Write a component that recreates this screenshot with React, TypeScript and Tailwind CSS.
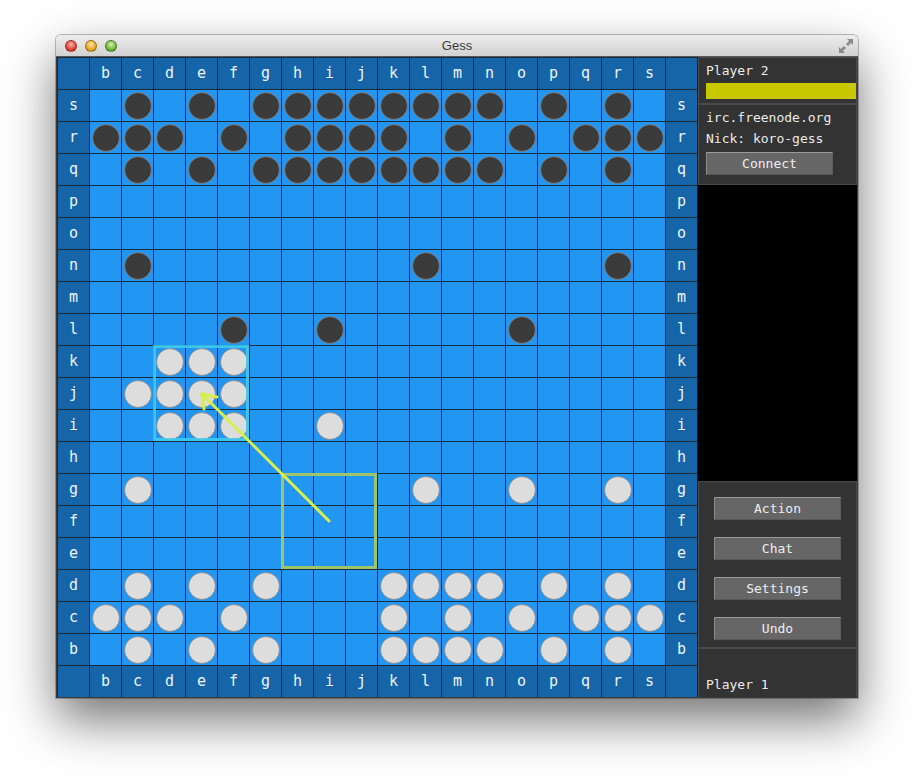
import React from 'react'

const COLS = 'bcdefghijklmnopqrs'.split('')
const ROWS = 'srqponmlkjihgfedcb'.split('')

// stones per row, listed by column letter
const BLACK: Record<string, string> = {
  s: 'ceghijklmnpr',
  r: 'bcdfhijkmoqrs',
  q: 'ceghijklmnpr',
  n: 'clr',
  l: 'fio',
}
const WHITE: Record<string, string> = {
  k: 'def',
  j: 'cdef',
  i: 'defi',
  g: 'clor',
  d: 'cegklmnpr',
  c: 'bcdfkmoqrs',
  b: 'cegklmnpr',
}

const mono = { fontFamily: '"DejaVu Sans Mono", "Liberation Mono", monospace' }

function Cell({ r, c }: { r: number; c: number }) {
  const edge = r === 0 || r === 19 || c === 0 || c === 19
  const base = 'flex h-[32px] w-[32px] items-center justify-center border-l border-t border-[#1a2a3a] '
  if (edge) {
    let label = ''
    if ((r === 0 || r === 19) && c > 0 && c < 19) label = COLS[c - 1]
    if ((c === 0 || c === 19) && r > 0 && r < 19) label = ROWS[r - 1]
    return (
      <div className={base + 'bg-[#1565a8] text-[15px] text-[#eef3f8]'} style={mono}>
        {label}
      </div>
    )
  }
  const row = ROWS[r - 1]
  const col = COLS[c - 1]
  const black = BLACK[row]?.includes(col)
  const white = WHITE[row]?.includes(col)
  return (
    <div className={base + 'bg-[#2196f3]'}>
      {black && <span className="h-[28px] w-[28px] rounded-full border border-[#808080] bg-[#3a3a3a]" />}
      {white && <span className="h-[28px] w-[28px] rounded-full border border-[#8e8e8e] bg-[#dddddd]" />}
    </div>
  )
}

function Board() {
  const cells = []
  for (let r = 0; r < 20; r++) for (let c = 0; c < 20; c++) cells.push(<Cell key={r * 20 + c} r={r} c={c} />)
  return (
    <div className="relative h-[640px] w-[640px]">
      <div className="grid grid-cols-[repeat(20,32px)]">{cells}</div>
      <svg className="pointer-events-none absolute left-0 top-0" width="640" height="640">
        <rect x="97.5" y="289.5" width="93" height="93" fill="none" stroke="#3fd0f0" strokeOpacity="0.85" strokeWidth="3" />
        <rect x="225.5" y="417.5" width="93" height="93" fill="none" stroke="#9fc46c" strokeWidth="3" />
        <g stroke="#d8ee4a" strokeWidth="3" strokeLinecap="round" fill="none">
          <line x1="272" y1="464" x2="145" y2="337" />
          <line x1="145" y1="337" x2="160" y2="340" />
          <line x1="145" y1="337" x2="147" y2="352" />
        </g>
      </svg>
    </div>
  )
}

function Btn({ children }: { children: React.ReactNode }) {
  return (
    <div
      className="flex h-[23px] w-[127px] items-center justify-center border border-b-[#575757] border-l-[#8c8c8c] border-r-[#5c5c5c] border-t-[#9a9a9a] bg-[#666666] text-[13px] text-[#eeeeee]"
      style={mono}
    >
      {children}
    </div>
  )
}

function Sidebar() {
  return (
    <div className="flex h-[640px] w-[160px] flex-col border-l border-[#1e1e1e] bg-[#333333] text-[13px] leading-[16px] text-[#ececec]" style={mono}>
      <div className="h-[47px] border border-[#4a4a4a] pt-[5px]">
        <div className="pl-[7px]">Player 2</div>
        <div className="ml-[7px] mt-[4px] h-[16px] bg-[#c8c800]" />
      </div>
      <div className="h-[81px] border border-[#4a4a4a] px-[7px] pt-[5px]">
        <div>irc.freenode.org</div>
        <div className="mt-[5px]">Nick: koro-gess</div>
        <div className="mt-[5px]">
          <Btn>Connect</Btn>
        </div>
      </div>
      <div className="h-[296px] bg-black" />
      <div className="flex h-[167px] flex-col gap-[17px] border border-[#4a4a4a] pl-[15px] pt-[15px]">
        <Btn>Action</Btn>
        <Btn>Chat</Btn>
        <Btn>Settings</Btn>
        <Btn>Undo</Btn>
      </div>
      <div className="flex flex-1 flex-col justify-end border border-b-0 border-[#4a4a4a] pb-[4px] pl-[7px]">
        <div>Player 1</div>
      </div>
    </div>
  )
}

function Light({ color }: { color: string }) {
  return <span className={'h-[12px] w-[12px] rounded-full border border-black/30 ' + color} />
}

export default function App() {
  return (
    <div className="h-[776px] w-[914px] bg-white pl-[56px] pt-[35px]">
      <div className="w-[802px] rounded-t-[5px] shadow-[0_22px_50px_rgba(0,0,0,0.55),0_0_0_1px_rgba(0,0,0,0.25)]">
        <div className="grid h-[22px] grid-cols-[1fr_auto_1fr] items-center rounded-t-[5px] border-b border-[#595959] bg-gradient-to-b from-[#ededed] to-[#d2d2d2]">
          <div className="flex items-center gap-[8px] pl-[9px]">
            <Light color="bg-[radial-gradient(circle_at_50%_35%,#ffb3ad,#e0443a_60%,#b8231c)]" />
            <Light color="bg-[radial-gradient(circle_at_50%_35%,#ffe6a8,#e6a520_60%,#c07e10)]" />
            <Light color="bg-[radial-gradient(circle_at_50%_35%,#d8f5b0,#70b83a_60%,#4a8f20)]" />
          </div>
          <div className="text-[13px] text-[#3c3c3c]" style={{ fontFamily: '"Liberation Sans", Arial, sans-serif' }}>
            Gess
          </div>
          <div className="flex justify-end pr-[5px]">
            <svg width="14" height="14" viewBox="0 0 14 14" fill="#8a8a8a">
              <path d="M14 0 L14 6 L12 4 L9 7 L7 5 L10 2 L8 0 Z" />
              <path d="M0 14 L0 8 L2 10 L5 7 L7 9 L4 12 L6 14 Z" />
            </svg>
          </div>
        </div>
        <div className="flex border-b border-l border-r border-[#3a3a3a]">
          <Board />
          <Sidebar />
        </div>
      </div>
    </div>
  )
}
